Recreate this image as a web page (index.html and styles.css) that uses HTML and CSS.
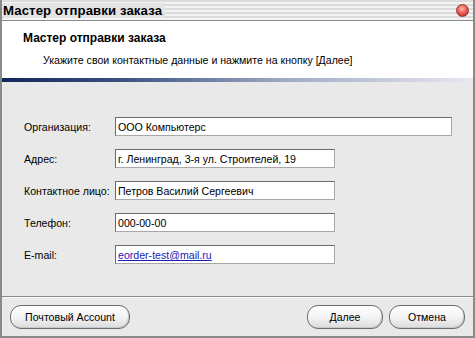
FILE: index.html
```html
<!DOCTYPE html>
<html lang="ru">
<head>
<meta charset="utf-8">
<link rel="stylesheet" href="styles.css">
</head>
<body>
<div class="window">
  <div class="titlebar">
    <span class="title">Мастер отправки заказа</span>
    <span class="close"></span>
  </div>
  <div class="header">
    <div class="h-title">Мастер отправки заказа</div>
    <div class="h-sub">Укажите свои контактные данные и нажмите на кнопку [Далее]</div>
  </div>
  <div class="grad"></div>
  <div class="content">
    <div class="row"><label>Организация:</label><div class="field wide">ООО Компьютерс</div></div>
    <div class="row"><label>Адрес:</label><div class="field">г. Ленинград, 3-я ул. Строителей, 19</div></div>
    <div class="row"><label>Контактное лицо:</label><div class="field">Петров Василий Сергеевич</div></div>
    <div class="row"><label>Телефон:</label><div class="field">000-00-00</div></div>
    <div class="row"><label>E-mail:</label><div class="field"><span class="link">eorder-test@mail.ru</span></div></div>
  </div>
  <div class="footer">
    <button class="btn btn-account">Почтовый Account</button>
    <div class="spacer"></div>
    <button class="btn">Далее</button>
    <button class="btn">Отмена</button>
  </div>
</div>
</body>
</html>
```
FILE: styles.css
```css
html, body {
  margin: 0;
  padding: 0;
  background: #e9e9e9;
}
body {
  font-family: "Liberation Sans", Arial, sans-serif;
  font-size: 10.6px;
  color: #000;
}
.window {
  width: 475px;
  height: 338px;
  box-sizing: border-box;
  border-left: 2px solid #8a8a8a;
  border-right: 2px solid #8a8a8a;
  border-bottom: 2px solid #8a8a8a;
  display: flex;
  flex-direction: column;
  background: #e9e9e9;
}
.titlebar {
  height: 21px;
  box-sizing: border-box;
  border-bottom: 1px solid #8a8a8a;
  background: repeating-linear-gradient(to bottom, #dcdcdc 0px, #dcdcdc 2px, #f4f4f4 2px, #f4f4f4 4px);
  display: flex;
  align-items: center;
  padding: 0 4px 0 1px;
}
.title {
  font-weight: bold;
  font-size: 13.2px;
  background: #e4e4e4;
  padding-right: 3px;
  letter-spacing: 0.1px;
}
.close {
  margin-left: auto;
  width: 13px;
  height: 13px;
  border-radius: 50%;
  background: radial-gradient(circle at 45% 35%, #ffb8b0 0%, #f0685e 40%, #c8302a 80%, #9a2520 100%);
  border: 1px solid #8c3a36;
  box-sizing: border-box;
}
.header {
  background: #fff;
  height: 57px;
  box-sizing: border-box;
  padding: 10px 0 0 21px;
}
.h-title {
  font-weight: bold;
  font-size: 12px;
}
.h-sub {
  margin: 9px 0 0 20px;
}
.grad {
  height: 4px;
  background: linear-gradient(to right, #10285a 0%, #3a5080 25%, #a0aac4 60%, #e8e8ee 100%);
}
.content {
  flex: 1;
  padding: 35px 0 0 22px;
  display: flex;
  flex-direction: column;
  gap: 13px;
  border-bottom: 1px solid #8a8a8a;
}
.row {
  display: flex;
  align-items: center;
  height: 19px;
}
.row label {
  width: 91px;
}
.field {
  width: 220px;
  height: 19px;
  box-sizing: border-box;
  background: #fff;
  border: 1px solid #6a6a6a;
  border-right-color: #a8a8a8;
  border-bottom-color: #a8a8a8;
  padding: 2px 2px;
  line-height: 14px;
  white-space: nowrap;
}
.field.wide {
  width: 337px;
}
.link {
  color: #1a1ab0;
  text-decoration: underline;
}
.footer {
  height: 38px;
  display: flex;
  align-items: center;
  padding: 0 8px;
  gap: 6px;
  border-top: 1px solid #f8f8f8;
}
.spacer {
  flex: 1;
}
.btn {
  font-family: "Liberation Sans", Arial, sans-serif;
  font-size: 10.6px;
  height: 24px;
  width: 76px;
  border: 1px solid #6a6a6a;
  border-radius: 11px;
  background: linear-gradient(to bottom, #ffffff 0%, #f4f4f4 50%, #dcdcdc 100%);
  box-shadow: inset -1px -1px 0 #c8c8c8, inset 1px 1px 0 #fff;
  color: #000;
  padding: 0;
}
.btn-account {
  width: 120px;
}
```
